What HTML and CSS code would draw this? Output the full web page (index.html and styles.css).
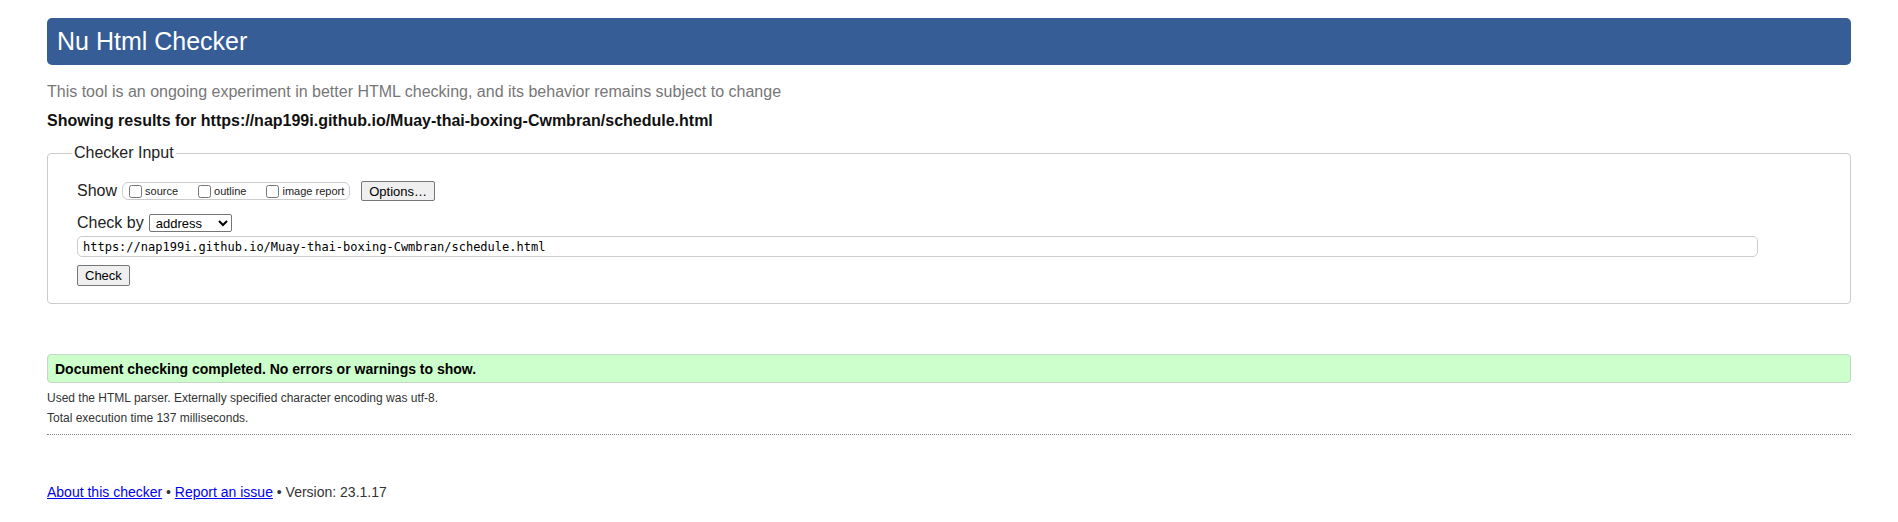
FILE: index.html
```html
<!DOCTYPE html>
<html lang="en">
<head>
<meta charset="utf-8">
<title>Nu Html Checker</title>
<link rel="stylesheet" href="styles.css">
</head>
<body>
<h1 class="title">Nu Html Checker</h1>
<p class="tagline">This tool is an ongoing experiment in better HTML checking, and its behavior remains subject to change</p>
<p class="showing">Showing results for https://nap199i.github.io/Muay-thai-boxing-Cwmbran/schedule.html</p>
<form class="checker">
  <fieldset class="input-set">
    <legend class="input-legend">Checker Input</legend>
    <div class="row row-show">
      <span class="label">Show</span>
      <fieldset class="show-box">
        <label class="opt"><input type="checkbox" class="cb">source</label>
        <label class="opt"><input type="checkbox" class="cb">outline</label>
        <label class="opt last"><input type="checkbox" class="cb">image report</label>
      </fieldset>
      <button type="button" class="btn btn-options">Options…</button>
    </div>
    <div class="row row-by">
      <span class="label">Check by</span>
      <select class="sel"><option>address</option></select>
    </div>
    <div class="row row-url">
      <input class="url" type="url" value="https://nap199i.github.io/Muay-thai-boxing-Cwmbran/schedule.html">
    </div>
    <div class="row row-check">
      <button type="button" class="btn btn-check">Check</button>
    </div>
  </fieldset>
</form>
<div class="success">Document checking completed. No errors or warnings to show.</div>
<p class="details">Used the HTML parser. Externally specified character encoding was utf-8.</p>
<p class="details">Total execution time 137 milliseconds.</p>
<hr class="sep">
<p class="footer"><a href="#" class="link">About this checker</a> • <a href="#" class="link">Report an issue</a> • Version: 23.1.17</p>
</body>
</html>
```

FILE: styles.css
```css
html, body {
  background: #fff;
}
body {
  margin: 0;
  padding: 18px 47px 0 47px;
  font-family: "Liberation Sans", Arial, sans-serif;
  color: #000;
}
.title {
  margin: 0;
  height: 47px;
  line-height: 47px;
  padding: 0 10px;
  font-size: 25px;
  font-weight: normal;
  color: #fff;
  background: #365d95;
  border-radius: 5px;
}
.tagline {
  margin: 18px 0 0;
  font-size: 16px;
  line-height: 18px;
  color: #777;
}
.showing {
  margin: 11px 0 0;
  font-size: 16px;
  line-height: 18px;
  font-weight: bold;
  color: #111;
}
.checker {
  margin: 14px 0 0;
}
.input-set {
  margin: 0;
  padding: 19px 92px 17px 24px;
  border: 1px solid #ccc;
  border-radius: 4px;
  min-width: 0;
}
.input-legend {
  padding: 0 2px;
  font-size: 16px;
  line-height: 18px;
  color: #222;
}
.row {
  display: flex;
  align-items: center;
  padding-left: 5px;
}
.label {
  font-size: 16px;
  line-height: 18px;
  color: #222;
}
.row-show {
  height: 20px;
}
.show-box {
  display: flex;
  align-items: center;
  margin: 0 0 0 5px;
  padding: 0 5px 0 2px;
  height: 18px;
  box-sizing: border-box;
  border: 1px solid #ccc;
  border-radius: 6px;
  min-width: 0;
}
.opt {
  display: flex;
  align-items: center;
  font-size: 11px;
  line-height: 13px;
  color: #222;
  margin-right: 16px;
}
.opt.last {
  margin-right: 0;
}
.cb {
  width: 13px;
  height: 13px;
  margin: 0 3px 0 4px;
}
.btn {
  font-family: "Liberation Sans", Arial, sans-serif;
  font-size: 13px;
  color: #000;
  background: #efefef;
  border: 1px solid #767676;
  border-radius: 2px;
  padding: 0 7px;
  box-sizing: border-box;
}
.btn-options {
  height: 20px;
  margin-left: 11px;
}
.row-by {
  margin-top: 13px;
  height: 18px;
}
.sel {
  margin-left: 5px;
  width: 83px;
  height: 18px;
  box-sizing: border-box;
  font-family: "Liberation Sans", Arial, sans-serif;
  font-size: 13px;
  color: #000;
  background: #fff;
  border: 1px solid #767676;
  border-radius: 2px;
  padding: 0 0 0 2px;
}
.row-url {
  margin-top: 4px;
}
.url {
  width: 100%;
  height: 21px;
  box-sizing: border-box;
  border: 1px solid #ccc;
  border-radius: 5px;
  padding: 0 5px;
  font-family: "DejaVu Sans Mono", "Liberation Mono", monospace;
  font-size: 12px;
  color: #000;
  background: #fff;
  outline: none;
}
.row-check {
  margin-top: 8px;
}
.btn-check {
  height: 21px;
  padding: 0 7px;
}
.success {
  margin-top: 50px;
  padding: 2px 7px 0;
  height: 29px;
  box-sizing: border-box;
  line-height: 25px;
  font-size: 14px;
  font-weight: bold;
  color: #000;
  background: #ccffcc;
  border: 1px solid #c6d6c6;
  border-radius: 4px;
}
.details {
  margin: 0;
  font-size: 12px;
  line-height: 20px;
  color: #333;
}
.success + .details {
  margin-top: 5px;
}
.sep {
  margin: 6px 0 0;
  border: 0;
  border-top: 1px dotted #888;
  height: 0;
}
.footer {
  margin: 48px 0 0;
  font-size: 14px;
  line-height: 18px;
  color: #333;
}
.link {
  color: #0000ee;
}
```
